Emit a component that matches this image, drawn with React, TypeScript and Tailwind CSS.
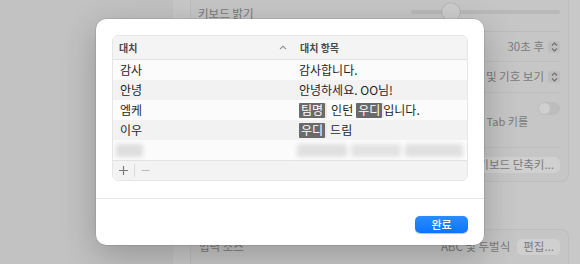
import React from "react";

const font = { fontFamily: '"Noto Sans CJK KR", "Noto Sans", sans-serif' };

function Stepper() {
  return (
    <div className="flex h-[12px] w-[12px] items-center justify-center rounded-[3px] bg-[#bdbdbd]">
      <svg width="7" height="10" viewBox="0 0 7 10" fill="none" stroke="#6f6f6f" strokeWidth="1.2">
        <path d="M1 3.5 L3.5 1 L6 3.5" />
        <path d="M1 6.5 L3.5 9 L6 6.5" />
      </svg>
    </div>
  );
}

function Token({ children }: { children: React.ReactNode }) {
  return (
    <span className="inline-flex h-[15px] items-center rounded-[1px] bg-[#6a6a6a] px-[2px] text-[12px] leading-none text-white shadow-[2px_0_0_#e9e9e9]">
      {children}
    </span>
  );
}

const rows = [
  { k: "감사", v: <span>감사합니다.</span> },
  { k: "안녕", v: <span>안녕하세요. OO님!</span> },
  {
    k: "엠케",
    v: (
      <span className="flex items-center">
        <Token>팀명</Token>
        <span className="ml-[6px] mr-[3px]">인턴</span>
        <Token>우디</Token>
        <span className="ml-[1px]">입니다.</span>
      </span>
    ),
  },
  {
    k: "이우",
    v: (
      <span className="flex items-center">
        <Token>우디</Token>
        <span className="ml-[5px]">드림</span>
      </span>
    ),
  },
];

export default function App() {
  return (
    <div className="relative flex h-[264px] w-[580px] overflow-hidden bg-[#c3c3c3]" style={font}>
      {/* dimmed settings window behind */}
      <div className="w-[173px] shrink-0 bg-[#c2c2c2]" />
      <div className="flex flex-1 flex-col bg-[#c8c8c8] pl-[17px] pr-[11px]">
        <div className="flex flex-col rounded-b-[8px] border-x border-b border-[#bebebe] bg-[#c6c6c6] px-[8px] text-[11.5px] text-[#7a7a7a]">
          <div className="flex h-[32px] items-start border-b border-[#bdbdbd] pt-[5px]">
            <span className="ml-[-1px]">키보드 밝기</span>
            <div className="relative ml-auto mt-[5px] h-[4px] w-[149px] rounded-full bg-[#b9b9b9]">
              <div className="absolute left-[31px] top-[-7px] h-[18px] w-[18px] rounded-full bg-[#cdcdcd] shadow-[0_0_1px_rgba(0,0,0,0.35)]" />
            </div>
          </div>
          <div className="flex h-[30px] items-center justify-end gap-[4px] border-b border-[#bdbdbd]">
            <span>30초 후</span>
            <Stepper />
          </div>
          <div className="flex h-[31px] items-center justify-end gap-[4px] border-b border-[#bdbdbd]">
            <span>이모티콘 및 기호 보기</span>
            <Stepper />
          </div>
          <div className="flex h-[55px] flex-col border-b border-[#bdbdbd] pt-[9px]">
            <div className="flex justify-end">
              <div className="h-[13px] w-[22px] rounded-full bg-[#bdbdbd] p-[1px]">
                <div className="h-[11px] w-[11px] rounded-full bg-[#cfcfcf]" />
              </div>
            </div>
            <div className="flex justify-end pr-[32px] text-[11px] leading-[13px]">
              <span>하려면 Tab 키를</span>
            </div>
          </div>
          <div className="flex h-[33px] items-center justify-end">
            <div className="flex h-[16px] items-center rounded-[5px] bg-[#d0d0d0] px-[6px]">
              키보드 단축키...
            </div>
          </div>
        </div>
        <div className="mt-[47px] flex h-[40px] items-center rounded-t-[8px] border-x border-t border-[#bebebe] bg-[#c6c6c6] px-[8px] text-[11.5px] text-[#7a7a7a]">
          <span>입력 소스</span>
          <span className="ml-auto">ABC 및 두벌식</span>
          <div className="ml-[7px] flex h-[16px] items-center rounded-[5px] bg-[#d0d0d0] px-[6px]">편집...</div>
        </div>
      </div>

      {/* modal sheet */}
      <div className="absolute left-[96px] top-[19px] flex h-[226px] w-[388px] flex-col rounded-[10px] bg-white shadow-[0_0_0_0.5px_rgba(0,0,0,0.15),0_10px_34px_rgba(0,0,0,0.24)]">
        <div className="px-[16px] pt-[16px]">
          <div className="overflow-hidden rounded-[6px] border border-[#e6e6e6]">
            <div className="flex h-[24px] items-center border-b border-[#e3e3e3] bg-[#f4f4f4] text-[10px] font-semibold text-[#4a4a4a]">
              <div className="flex w-[183px] items-center pl-[6px] pr-[9px]">
                <span>대치</span>
                <svg className="ml-auto" width="8" height="5" viewBox="0 0 8 5" fill="none" stroke="#8a8a8a" strokeWidth="1.1">
                  <path d="M1 4.2 L4 1.2 L7 4.2" />
                </svg>
              </div>
              <div className="pl-[4px]">대치 항목</div>
            </div>
            {rows.map((r, i) => (
              <div
                key={r.k}
                className={`flex h-[20px] items-center text-[12px] text-[#1f1f1f] ${i % 2 === 0 ? "bg-[#fbfbfb]" : "bg-[#f2f2f2]"}`}
              >
                <div className="w-[183px] pl-[7px]">{r.k}</div>
                <div className="pl-[3px]">{r.v}</div>
              </div>
            ))}
            <div className="flex h-[20px] items-center bg-[#fbfbfb]">
              <div className="w-[183px] pl-[3px]">
                <div className="h-[13px] w-[27px] rounded-[3px] bg-[#dedede] blur-[2px]" />
              </div>
              <div className="flex gap-[4px] pl-[1px] blur-[2px]">
                <div className="h-[13px] w-[50px] rounded-[3px] bg-[#e0e0e0]" />
                <div className="h-[13px] w-[50px] rounded-[3px] bg-[#e3e3e3]" />
                <div className="h-[13px] w-[58px] rounded-[3px] bg-[#e0e0e0]" />
              </div>
            </div>
            <div className="flex h-[20px] items-center border-t border-[#e3e3e3] bg-[#f3f3f3] pl-[5px]">
              <svg width="11" height="11" viewBox="0 0 11 11" stroke="#7a7a7a" strokeWidth="1.2">
                <path d="M5.5 1 V10 M1 5.5 H10" />
              </svg>
              <div className="ml-[5px] h-[13px] w-px bg-[#dcdcdc]" />
              <svg className="ml-[5px]" width="11" height="11" viewBox="0 0 11 11" stroke="#b8b8b8" strokeWidth="1.1">
                <path d="M1.5 5.5 H9.5" />
              </svg>
            </div>
          </div>
        </div>
        <div className="mt-[17px] h-px bg-[#e6e6e6]" />
        <div className="flex flex-1 items-start justify-end px-[16px] pt-[17px]">
          <button className="flex h-[17px] w-[53px] items-center justify-center rounded-[5px] bg-gradient-to-b from-[#2a8cff] to-[#0a74ff] text-[11px] font-medium text-white shadow-[0_0.5px_1px_rgba(0,0,0,0.25)]">
            완료
          </button>
        </div>
      </div>
    </div>
  );
}
